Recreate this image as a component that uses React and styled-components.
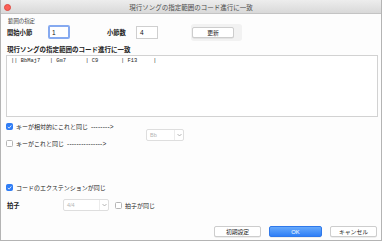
import React from "react";
import styled, { createGlobalStyle } from "styled-components";

const GlobalStyle = createGlobalStyle`
  html, body { margin: 0; padding: 0; background: #ffffff; }
  body { font-family: "Noto Sans CJK JP", "Noto Sans", sans-serif; }
  * { box-sizing: border-box; }
`;

const Window = styled.div`
  width: 382px;
  height: 241px;
  display: flex;
  flex-direction: column;
  background: #fdfdfd;
  border: 1px solid #b4b4b4;
  border-top: none;
  overflow: hidden;
`;

const TitleBar = styled.div`
  height: 14px;
  display: grid;
  grid-template-columns: 1fr auto 1fr;
  align-items: center;
  background: linear-gradient(#ededed, #d9d9d9);
  border-bottom: 1px solid #c4c4c4;
  padding: 0 3px;
`;

const CloseDot = styled.span`
  width: 7px;
  height: 7px;
  border-radius: 50%;
  background: #fc5f57;
  border: 0.5px solid #de4a41;
`;

const Title = styled.div`
  font-size: 6.5px;
  line-height: 14px;
  color: #4c4c4c;
  white-space: nowrap;
`;

const Body = styled.div`
  flex: 1;
  display: flex;
  flex-direction: column;
  padding: 0 3px 0 5px;
`;

const SmallLabel = styled.div`
  font-size: 5.4px;
  color: #3a3a3a;
  margin: 4px 0 0 2px;
  line-height: 6px;
`;

const RangeRow = styled.div`
  display: flex;
  align-items: center;
  height: 16px;
  margin-top: 0;
`;

const FieldLabel = styled.span`
  font-size: 6.3px;
  color: #222;
  font-weight: ${(p) => (p.$bold ? 700 : 400)};
  width: ${(p) => p.$w || "auto"};
  margin-left: ${(p) => p.$ml || "0"};
  white-space: nowrap;
`;

const NumInput = styled.div`
  width: 22px;
  height: ${(p) => (p.$focus ? "14px" : "13px")};
  background: #fff;
  border: ${(p) => (p.$focus ? "2px solid #86aaf0" : "1px solid #cfcfcf")};
  border-radius: ${(p) => (p.$focus ? "2px" : "0")};
  font-family: "Liberation Sans", sans-serif;
  font-size: 6.5px;
  color: #111;
  display: flex;
  align-items: center;
  padding-left: ${(p) => (p.$focus ? "2px" : "3px")};
`;

const ButtonHalo = styled.div`
  margin-left: 33px;
  padding: 3px 8px 3px 1px;
  background: #f2f2f2;
  border-radius: 3px;
  display: flex;
`;

const PushButton = styled.div`
  width: ${(p) => p.$w};
  height: 11px;
  border-radius: 2px;
  display: flex;
  align-items: center;
  justify-content: center;
  font-size: 5.8px;
  color: ${(p) => (p.$primary ? "#fff" : "#222")};
  background: ${(p) =>
    p.$primary ? "linear-gradient(#67a9fb, #2f7ff7)" : "#ffffff"};
  border: 1px solid ${(p) => (p.$primary ? "#2f78ea" : "#cdcdcd")};
  box-shadow: 0 0.5px 0.5px rgba(0, 0, 0, 0.12);
  font-family: ${(p) =>
    p.$latin ? '"Liberation Sans", sans-serif' : '"Noto Sans CJK JP", sans-serif'};
`;

const SectionTitle = styled.div`
  font-size: 6.5px;
  font-weight: 700;
  color: #222;
  margin: 5px 0 0 1px;
  line-height: 8px;
`;

const ChordBox = styled.div`
  height: 62px;
  margin: 2px 0 0 0;
  background: #fff;
  border: 1px solid #d2d2d2;
  padding: 2px 4px;
  font-family: "Liberation Mono", monospace;
  font-size: 5.4px;
  line-height: 7px;
  color: #222;
  white-space: pre;
`;

const KeyGrid = styled.div`
  display: grid;
  grid-template-columns: 140px auto;
  align-items: center;
  margin-top: 5px;
`;

const CheckList = styled.div`
  display: flex;
  flex-direction: column;
  gap: 8px;
`;

const CheckRow = styled.label`
  display: flex;
  align-items: center;
  gap: 3px;
  margin-left: ${(p) => p.$ml || "0"};
  font-size: 6px;
  color: #222;
  white-space: nowrap;
`;

const Box = styled.span`
  width: 7px;
  height: 7px;
  border-radius: 1.5px;
  flex: none;
  display: flex;
  align-items: center;
  justify-content: center;
  background: ${(p) => (p.$checked ? "#2f7df6" : "#fff")};
  border: 1px solid ${(p) => (p.$checked ? "#2f7df6" : "#b5b5b5")};
`;

const Dashes = styled.span`
  font-family: "Liberation Sans", sans-serif;
  font-size: 6.5px;
  margin-left: 3px;
  letter-spacing: 0.2px;
`;

const Select = styled.div`
  width: ${(p) => p.$w};
  height: 12px;
  background: #fff;
  border: 1px solid #dedede;
  border-radius: 2px;
  display: flex;
  align-items: center;
  font-family: "Liberation Sans", sans-serif;
  font-size: 5.5px;
  color: #b3b3b3;
  margin-left: ${(p) => p.$ml || "0"};
`;

const SelectText = styled.span`
  flex: 1;
  padding-left: 3px;
`;

const SelectArrow = styled.span`
  width: 9px;
  height: 100%;
  border-left: 1px solid #ececec;
  display: flex;
  align-items: center;
  justify-content: center;
`;

const ExtRow = styled.div`
  margin-top: 35px;
`;

const MeterRow = styled.div`
  display: flex;
  align-items: center;
  margin-top: 7px;
`;

const Footer = styled.div`
  display: flex;
  justify-content: flex-end;
  gap: 8px;
  margin-top: auto;
  padding: 0 1px 3px 0;
`;

const Check = () => (
  <svg width="6" height="6" viewBox="0 0 10 10">
    <path d="M2 5.2 L4.2 7.4 L8.2 2.4" fill="none" stroke="#fff" strokeWidth="1.6" strokeLinecap="round" strokeLinejoin="round" />
  </svg>
);

const Chevron = () => (
  <svg width="5" height="4" viewBox="0 0 10 6">
    <path d="M1 1 L5 5 L9 1" fill="none" stroke="#9a9a9a" strokeWidth="1.4" />
  </svg>
);

const CheckBox = ({ checked }) => <Box $checked={checked}>{checked && <Check />}</Box>;

export default function App() {
  return (
    <>
      <GlobalStyle />
      <Window>
        <TitleBar>
          <CloseDot />
          <Title>現行ソングの指定範囲のコード進行に一致</Title>
          <span />
        </TitleBar>
        <Body>
          <SmallLabel>範囲の指定</SmallLabel>
          <RangeRow>
            <FieldLabel $bold $w="41px" $ml="1px">開始小節</FieldLabel>
            <NumInput $focus>1</NumInput>
            <FieldLabel $bold $w="29px" $ml="37px">小節数</FieldLabel>
            <NumInput>4</NumInput>
            <ButtonHalo>
              <PushButton $w="42px">更新</PushButton>
            </ButtonHalo>
          </RangeRow>
          <SectionTitle>現行ソングの指定範囲のコード進行に一致</SectionTitle>
          <ChordBox>{"|| BbMaj7   | Gm7      | C9       | F13     |"}</ChordBox>
          <KeyGrid>
            <CheckList>
              <CheckRow>
                <CheckBox checked />
                <span>キーが相対的にこれと同じ<Dashes>--------&gt;</Dashes></span>
              </CheckRow>
              <CheckRow>
                <CheckBox />
                <span>キーがこれと同じ<Dashes>---------------&gt;</Dashes></span>
              </CheckRow>
            </CheckList>
            <Select $w="38px">
              <SelectText>Bb</SelectText>
              <SelectArrow><Chevron /></SelectArrow>
            </Select>
          </KeyGrid>
          <ExtRow>
            <CheckRow>
              <CheckBox checked />
              <span>コードのエクステンションが同じ</span>
            </CheckRow>
          </ExtRow>
          <MeterRow>
            <FieldLabel $bold $w="56px" $ml="1px">拍子</FieldLabel>
            <Select $w="46px">
              <SelectText>4/4</SelectText>
              <SelectArrow><Chevron /></SelectArrow>
            </Select>
            <CheckRow $ml="6px">
              <CheckBox />
              <span>拍子が同じ</span>
            </CheckRow>
          </MeterRow>
          <Footer>
            <PushButton $w="47px">初期設定</PushButton>
            <PushButton $w="53px" $primary $latin>OK</PushButton>
            <PushButton $w="47px">キャンセル</PushButton>
          </Footer>
        </Body>
      </Window>
    </>
  );
}
